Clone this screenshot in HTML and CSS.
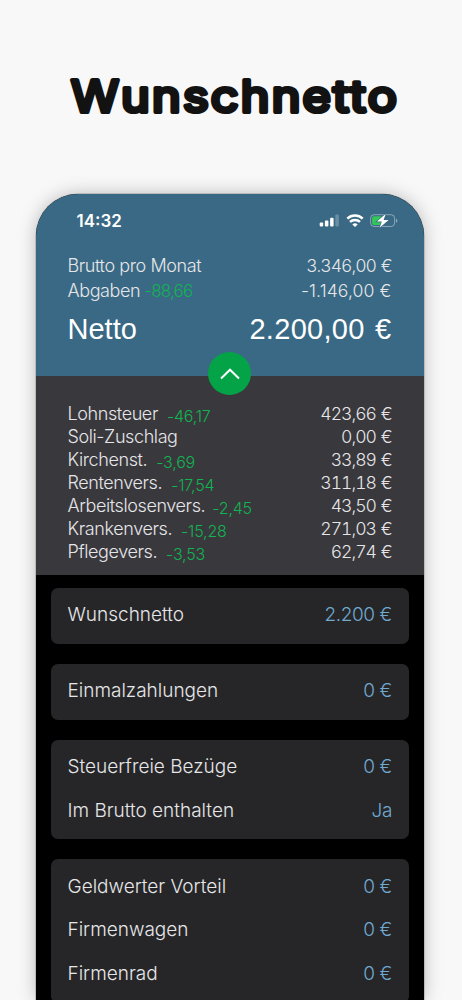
FILE: index.html
```html
<!DOCTYPE html>
<html lang="de">
<head>
  <meta charset="utf-8">
  <title>Wunschnetto</title>
  <link rel="stylesheet" href="styles.css">
</head>
<body>
  <svg class="title" width="462" height="194" viewBox="0 0 462 194">
    <text x="71" y="112" textLength="328" lengthAdjust="spacingAndGlyphs">Wunschnetto</text>
  </svg>

  <div class="phone">
    <div class="header">
      <div class="status">
        <span class="time">14:32</span>
        <svg class="status-icons" width="80" height="16" viewBox="0 0 80 16">
          <!-- signal -->
          <g fill="#fff">
            <rect x="0.700" y="9.600" width="3.500" height="4" rx="1"/>
            <rect x="5.900" y="7.600" width="3.500" height="6" rx="1"/>
            <rect x="11.100" y="4.700" width="3.500" height="8.900" rx="1"/>
            <rect x="16.300" y="1.600" width="3.500" height="12" rx="1" opacity="0.250"/>
          </g>
          <!-- wifi -->
          <g fill="none" stroke="#fff" stroke-width="2.500">
            <path d="M28.300 5.600a11.100 11.100 0 0 1 15.400 0"/>
            <path d="M31 8.900a7.200 7.200 0 0 1 10 0"/>
          </g>
          <path d="M33.300 11.400a4 4 0 0 1 5.400 0L36 14.100z" fill="#fff"/>
          <!-- battery -->
          <rect x="51.600" y="1.700" width="24" height="11.800" rx="3.500" fill="none" stroke="#fff" stroke-opacity="0.400"/>
          <path d="M77 5.700v4q1.400-.6 1.400-2t-1.400-2z" fill="#fff" opacity="0.450"/>
          <rect x="53.100" y="3.200" width="10.300" height="8.800" rx="2" fill="#33c759"/>
          <path d="M66.800 0.800l-8.900 7.800h4.900l-2.100 6.200 8.900-7.900h-5z" fill="#fff" stroke="#396984" stroke-width="1.400" paint-order="stroke"/>
        </svg>
      </div>
      <div class="line"><span>Brutto pro Monat</span><span class="amount">3.346,00 €</span></div>
      <div class="line"><span>Abgaben<small>-88,66</small></span><span class="amount negative">-1.146,00 €</span></div>
      <div class="netto"><span>Netto</span><span class="sum">2.200,00 €</span></div>
      <div class="toggle">
        <svg width="20" height="12" viewBox="0 0 20 12"><path d="M1 10.500l9-8.800 9 8.800" fill="none" stroke="#fff" stroke-width="2"/></svg>
      </div>
    </div>

    <div class="details">
      <div class="line"><span>Lohnsteuer<small>-46,17</small></span><span class="amount">423,66 €</span></div>
      <div class="line"><span>Soli-Zuschlag</span><span class="amount">0,00 €</span></div>
      <div class="line"><span>Kirchenst.<small>-3,69</small></span><span class="amount">33,89 €</span></div>
      <div class="line"><span>Rentenvers.<small>-17,54</small></span><span class="amount">311,18 €</span></div>
      <div class="line"><span>Arbeitslosenvers.<small class="near">-2,45</small></span><span class="amount">43,50 €</span></div>
      <div class="line"><span>Krankenvers.<small>-15,28</small></span><span class="amount">271,03 €</span></div>
      <div class="line"><span>Pflegevers.<small>-3,53</small></span><span class="amount">62,74 €</span></div>
    </div>

    <div class="form">
      <div class="card">
        <div class="row"><span>Wunschnetto</span><span class="value">2.200 €</span></div>
      </div>
      <div class="card">
        <div class="row"><span>Einmalzahlungen</span><span class="value">0 €</span></div>
      </div>
      <div class="card">
        <div class="row"><span>Steuerfreie Bezüge</span><span class="value">0 €</span></div>
        <div class="row"><span>Im Brutto enthalten</span><span class="value">Ja</span></div>
      </div>
      <div class="card">
        <div class="row"><span>Geldwerter Vorteil</span><span class="value">0 €</span></div>
        <div class="row"><span>Firmenwagen</span><span class="value">0 €</span></div>
        <div class="row"><span>Firmenrad</span><span class="value">0 €</span></div>
      </div>
    </div>
  </div>
</body>
</html>
```
FILE: styles.css
```css
* {
  box-sizing: border-box;
}

body {
  margin: 0;
  height: 1000px;
  overflow: hidden;
  background-color: #f8f8f8;
  font-family: Inter, "Liberation Sans", sans-serif;
  font-weight: 300;
}

.title {
  display: block;
}

.title text {
  font-size: 44px;
  font-weight: 400;
  letter-spacing: 2px;
  fill: #121212;
  stroke: #121212;
  stroke-width: 4.2px;
  stroke-linejoin: round;
}

.phone {
  width: 387.5px;
  height: 806px;
  margin-left: 36px;
  border-radius: 42px 42px 0 0;
  background-color: #000;
  box-shadow: 0 0 0 0.5px #999, 0 0 18px rgba(0, 0, 0, 0.25);
  overflow: hidden;
  color: #e6e6e8;
}

.header {
  position: relative;
  height: 182px;
  padding: 0 32px 0 31.5px;
  background-color: #396984;
}

.status {
  display: flex;
  justify-content: space-between;
  align-items: center;
  height: 59px;
  padding: 0 0 6px 9px;
  margin-right: -7px;
}

.time {
  color: #fff;
  font-size: 17px;
  font-weight: 600;
}

.line {
  display: flex;
  justify-content: space-between;
  line-height: 25px;
  font-size: 18px;
  letter-spacing: -0.4px;
  white-space: nowrap;
}

.line small {
  margin-left: 4px;
  font-size: 17px;
  line-height: 0;
  letter-spacing: -0.8px;
  color: #12b352;
}

.amount {
  font-size: 17.6px;
  letter-spacing: -1px;
  word-spacing: 1px;
  font-variant-numeric: tabular-nums;
}

.negative {
  letter-spacing: 0.1px;
  word-spacing: 0;
  font-variant-numeric: normal;
}

.netto {
  display: flex;
  justify-content: space-between;
  line-height: 52px;
  font-family: "Liberation Sans", Arial, sans-serif;
  font-size: 29px;
  font-weight: 400;
  color: #fff;
}

.sum {
  letter-spacing: 0.3px;
  word-spacing: 2px;
}

.toggle {
  position: absolute;
  left: 172px;
  bottom: -19px;
  display: flex;
  justify-content: center;
  align-items: center;
  width: 43px;
  height: 43px;
  border-radius: 50%;
  background-color: #05a347;
}

.details {
  height: 199px;
  padding: 25.9px 32px 0 31.5px;
  background-color: #39383d;
}

.details .line {
  line-height: 23px;
}

.details small {
  position: relative;
  top: 2px;
  margin-left: 9px;
  font-size: 16px;
  letter-spacing: -0.2px;
}

.details .near {
  margin-left: 7px;
}

.form {
  display: flex;
  flex-direction: column;
  gap: 20px;
  padding: 13px 14.5px 0;
}

.card {
  padding: 5px 17px 7px;
  border-radius: 7px;
  background-color: #262628;
}

.row {
  display: flex;
  justify-content: space-between;
  align-items: center;
  height: 43.8px;
  font-size: 19px;
}

.value {
  letter-spacing: -0.4px;
  color: #6fa9cf;
}
```
